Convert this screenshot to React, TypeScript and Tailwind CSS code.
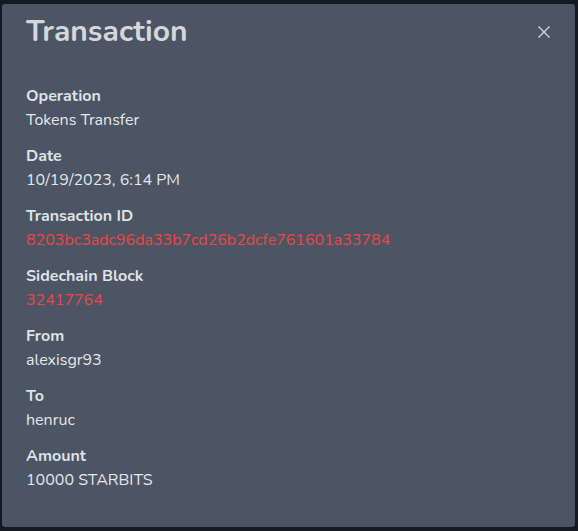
import React from "react";

const rows: { label: string; value: string; red?: boolean }[] = [
  { label: "Operation", value: "Tokens Transfer" },
  { label: "Date", value: "10/19/2023, 6:14 PM" },
  { label: "Transaction ID", value: "8203bc3adc96da33b7cd26b2dcfe761601a33784", red: true },
  { label: "Sidechain Block", value: "32417764", red: true },
  { label: "From", value: "alexisgr93" },
  { label: "To", value: "henruc" },
  { label: "Amount", value: "10000 STARBITS" },
];

export default function App() {
  return (
    <div
      className="w-[578px] h-[531px] bg-[#131a24] pt-[4px] pl-[2px] pr-[3px] pb-[4px]"
      style={{ fontFamily: '"Nunito", "Lato", "Open Sans", sans-serif' }}
    >
      <div className="h-full bg-[#4b5563] rounded-[3px] relative pl-[24px] pr-[25px]">
        <div className="pt-[10px] flex items-center justify-between">
          <h2 className="text-[30px] leading-[36px] font-bold text-[#d4d7dc]">Transaction</h2>
        </div>
        <button className="absolute right-[21px] top-[18px] w-[20px] h-[20px] flex items-center justify-center text-[#d1d5db]">
          <svg width="14" height="14" viewBox="0 0 14 14" fill="none" stroke="currentColor" strokeWidth="1.4">
            <path d="M1.5 1.5 L12.5 12.5 M12.5 1.5 L1.5 12.5" />
          </svg>
        </button>
        <div className="mt-[34px] flex flex-col gap-[12px]">
          {rows.map((r) => (
            <div key={r.label}>
              <div className="text-[16px] leading-[24px] font-bold text-[#dfe2e6]">{r.label}</div>
              <div
                className={
                  "text-[16px] leading-[24px] " + (r.red ? "text-[#ef4444]" : "text-[#e5e7eb]")
                }
              >
                {r.value}
              </div>
            </div>
          ))}
        </div>
      </div>
    </div>
  );
}
